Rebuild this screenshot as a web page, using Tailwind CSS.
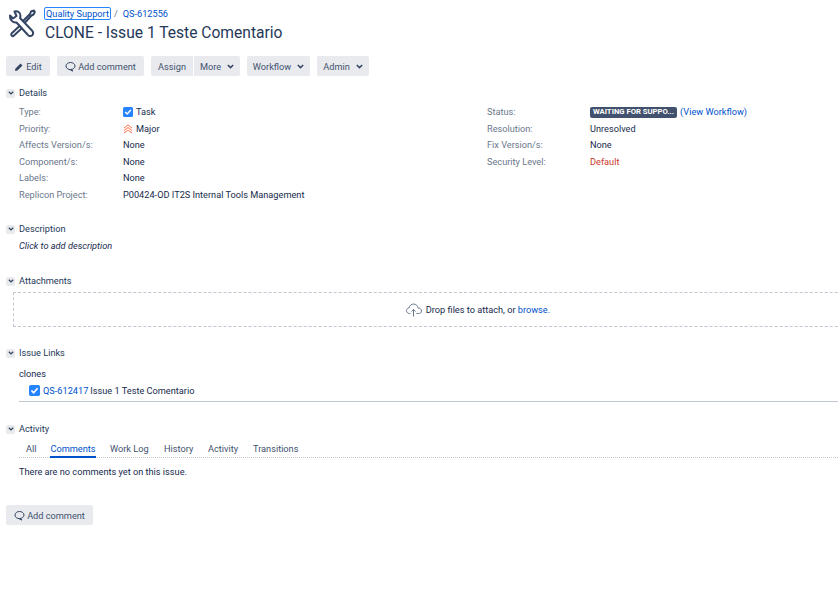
<!doctype html>
<html><head><meta charset="utf-8"><script src="https://cdn.jsdelivr.net/npm/@tailwindcss/browser@4"></script></head>
<body class="bg-white overflow-hidden">
<div class="w-[838px] h-[608px] overflow-hidden font-['Roboto',sans-serif] text-[9.2px] text-[#172b4d]">
  <header class="flex h-[54px] pl-[8px] pt-[7px]">
    <svg class="w-[28px] h-[29px] mt-[2px] text-[#344563]" viewBox="0 0 28 29" fill="none" stroke="currentColor" stroke-width="2" stroke-linecap="round" stroke-linejoin="round">
      <path d="M2 6.500 5 9.500 8.500 7 6.500 2.500C9.500 1.500 12.500 3.500 12.500 7L12 9 23.500 21C25.500 23 25.500 25 24 26.500C22.500 27.500 20.500 27 19.500 25.500L8.500 13.500C5 14 1.500 11 2 6.500Z"/>
      <path d="M11.500 17 3.500 24.500C2.500 26.500 4.500 28 6 26.500L13.500 19.500"/>
      <path d="M15.500 11.500 22 5 23 2.500 26 1.500 26.800 3 25.500 5.500 23.500 6.500 17.500 13"/>
    </svg>
    <div class="ml-[8px] flex flex-col">
      <div class="flex items-center h-[13px] text-[#0052cc]"><a class="px-[1px] border border-[#2684ff] rounded-[2px] leading-[11px]">Quality Support</a><span class="ml-[3px] text-[#5e6c84]">/</span><a class="ml-[5px]">QS-612556</a></div>
      <h1 class="mt-[3px] ml-[1px] text-[15.600px] leading-[20px] text-[#253858]">CLONE - Issue 1 Teste Comentario</h1>
    </div>
  </header>
  <nav class="flex ml-[6px] mt-[2px] h-[20px] text-[#42526e]">
    <button class="flex items-center justify-center pt-px w-[44px] bg-[#e9eaee] rounded-[2px]"><svg class="w-[10px] h-[10px] mr-[2px]" viewBox="0 0 10 10" fill="#344563"><path d="M1 9 1.500 6.500 6.500 1.500 8.500 3.500 3.500 8.500Z"/></svg>Edit</button>
    <button class="flex items-center justify-center pt-px w-[87px] ml-[7px] bg-[#e9eaee] rounded-[2px]"><svg class="w-[11px] h-[11px] mr-[2px]" viewBox="0 0 11 11" fill="none" stroke="#344563" stroke-width="1"><path d="M5.500 1.500C8 1.500 10 3 10 5S8 8.500 5.500 8.500L8 10 4 8.300C2 8 1 6.500 1 5 1 3 3 1.500 5.500 1.500Z"/></svg>Add comment</button>
    <button class="flex items-center justify-center pt-px w-[42px] ml-[7px] bg-[#e9eaee] rounded-l-[2px]">Assign</button>
    <button class="flex items-center justify-center pt-px w-[46px] ml-[1px] bg-[#e9eaee] rounded-r-[2px]">More<svg class="w-[7px] h-[5px] ml-[6px]" viewBox="0 0 7 5" fill="none" stroke="#344563" stroke-width="1.500"><path d="M.8 1 3.500 3.600 6.200 1"/></svg></button>
    <button class="flex items-center justify-center pt-px w-[63px] ml-[7px] bg-[#e9eaee] rounded-[2px]">Workflow<svg class="w-[7px] h-[5px] ml-[6px]" viewBox="0 0 7 5" fill="none" stroke="#344563" stroke-width="1.500"><path d="M.8 1 3.500 3.600 6.200 1"/></svg></button>
    <button class="flex items-center justify-center pt-px w-[52px] ml-[7px] bg-[#e9eaee] rounded-[2px]">Admin<svg class="w-[7px] h-[5px] ml-[6px]" viewBox="0 0 7 5" fill="none" stroke="#344563" stroke-width="1.500"><path d="M.8 1 3.500 3.600 6.200 1"/></svg></button>
  </nav>
  <section class="mt-[10px] h-[136px]">
    <div class="flex items-center h-[14px] ml-[6px]"><span class="flex items-center justify-center w-[9px] h-[9px] bg-[#e9eaee] rounded-[2px]"><svg class="w-[6px] h-[4px]" viewBox="0 0 7 5" fill="none" stroke="#344563" stroke-width="1.600"><path d="M.8 1 3.500 3.600 6.200 1"/></svg></span><span class="ml-[4px] text-[#253858]">Details</span></div>
    <div class="mt-[4px] ml-[19px] flex">
      <dl class="w-[468px] grid grid-cols-[104px_1fr] auto-rows-[16.500px] items-center text-[#172b4d]">
        <dt class="text-[#6b778c]">Type:</dt><dd class="flex items-center"><svg class="w-[10px] h-[10px] mr-[3px]" viewBox="0 0 10 10"><rect width="10" height="10" rx="1.500" fill="#2684ff"/><path d="M2.200 5 4.200 7 7.800 3" fill="none" stroke="#fff" stroke-width="1.500"/></svg>Task</dd>
        <dt class="text-[#6b778c]">Priority:</dt><dd class="flex items-center"><svg class="w-[10px] h-[10px] mr-[3px]" viewBox="0 0 10 10" fill="none" stroke="#ff7452" stroke-width="1"><path d="M1 4 5 1 9 4M1 6.500 5 3.500 9 6.500M1 9 5 6 9 9"/></svg>Major</dd>
        <dt class="text-[#6b778c]">Affects Version/s:</dt><dd>None</dd>
        <dt class="text-[#6b778c]">Component/s:</dt><dd>None</dd>
        <dt class="text-[#6b778c]">Labels:</dt><dd>None</dd>
        <dt class="text-[#6b778c]">Replicon Project:</dt><dd>P00424-OD IT2S Internal Tools Management</dd>
      </dl>
      <dl class="grid grid-cols-[103px_1fr] auto-rows-[16.500px] items-center self-start">
        <dt class="text-[#6b778c]">Status:</dt><dd class="flex items-center"><span class="px-[3px] h-[11px] leading-[10px] bg-[#42526e] text-white font-bold text-[7.700px] rounded-[2px]">WAITING FOR SUPPO...</span><a class="ml-[3px] text-[#0052cc]">(View Workflow)</a></dd>
        <dt class="text-[#6b778c]">Resolution:</dt><dd>Unresolved</dd>
        <dt class="text-[#6b778c]">Fix Version/s:</dt><dd>None</dd>
        <dt class="text-[#6b778c]">Security Level:</dt><dd class="text-[#c9372c]">Default</dd>
      </dl>
    </div>
  </section>
  <section class="h-[52px]">
    <div class="flex items-center h-[14px] ml-[6px]"><span class="flex items-center justify-center w-[9px] h-[9px] bg-[#e9eaee] rounded-[2px]"><svg class="w-[6px] h-[4px]" viewBox="0 0 7 5" fill="none" stroke="#344563" stroke-width="1.600"><path d="M.8 1 3.500 3.600 6.200 1"/></svg></span><span class="ml-[4px] text-[#253858]">Description</span></div>
    <p class="ml-[19px] mt-[3px] italic">Click to add description</p>
  </section>
  <section class="h-[72px]">
    <div class="flex items-center h-[14px] ml-[6px]"><span class="flex items-center justify-center w-[9px] h-[9px] bg-[#e9eaee] rounded-[2px]"><svg class="w-[6px] h-[4px]" viewBox="0 0 7 5" fill="none" stroke="#344563" stroke-width="1.600"><path d="M.8 1 3.500 3.600 6.200 1"/></svg></span><span class="ml-[4px] text-[#253858]">Attachments</span></div>
    <div class="ml-[13px] mt-[4px] w-[930px] h-[35px] border border-dashed border-[#c1c7d0] flex items-center justify-center">
      <svg class="w-[16px] h-[14px] mr-[4px]" viewBox="0 0 16 14" fill="none" stroke="#6b778c" stroke-width="1"><path d="M4.500 10.500H3.500C1.500 10.500 .5 9 .5 7.500S2 5 3 5C3.500 2.500 5.500 1 7.500 1 10 1 11.800 2.800 12 5 14 5 15.500 6 15.500 8S14 10.500 12.500 10.500H10.500"/><path d="M7.500 13.500V6.500M5.500 8.500 7.500 6.500 9.500 8.500"/></svg>
      <span>Drop files to attach, or <a class="text-[#0052cc]">browse.</a></span>
    </div>
  </section>
  <section class="h-[76px]">
    <div class="flex items-center h-[14px] ml-[6px]"><span class="flex items-center justify-center w-[9px] h-[9px] bg-[#e9eaee] rounded-[2px]"><svg class="w-[6px] h-[4px]" viewBox="0 0 7 5" fill="none" stroke="#344563" stroke-width="1.600"><path d="M.8 1 3.500 3.600 6.200 1"/></svg></span><span class="ml-[4px] text-[#253858]">Issue Links</span></div>
    <div class="ml-[19px] mt-[7px] h-[14px] leading-[14px]">clones</div>
    <div class="ml-[19px] mt-[3px] h-[18px] pl-[10px] border-b border-[#c1c7d0] flex items-start"><svg class="w-[11px] h-[11px] mr-[3px] mt-[1px]" viewBox="0 0 10 10"><rect width="10" height="10" rx="1.500" fill="#2684ff"/><path d="M2.200 5 4.200 7 7.800 3" fill="none" stroke="#fff" stroke-width="1.500"/></svg><a class="text-[#0052cc] leading-[13px]">QS-612417</a><span class="ml-[2px] leading-[13px]">Issue 1 Teste Comentario</span></div>
  </section>
  <section>
    <div class="flex items-center h-[14px] ml-[6px]"><span class="flex items-center justify-center w-[9px] h-[9px] bg-[#e9eaee] rounded-[2px]"><svg class="w-[6px] h-[4px]" viewBox="0 0 7 5" fill="none" stroke="#344563" stroke-width="1.600"><path d="M.8 1 3.500 3.600 6.200 1"/></svg></span><span class="ml-[4px] text-[#253858]">Activity</span></div>
    <div class="ml-[19px] mt-[6px] h-[16px] flex border-b border-dotted border-[#c1c7d0] text-[#42526e] pl-[7px]">
      <a class="leading-[14px] w-[11px]">All</a><a class="ml-[13px] w-[46px] text-center h-[16px] leading-[14px] border-b-2 border-[#0052cc] text-[#0052cc]">Comments</a><a class="ml-[14px] w-[40px] leading-[14px]">Work Log</a><a class="ml-[14px] w-[30px] leading-[14px]">History</a><a class="ml-[14px] w-[31px] leading-[14px]">Activity</a><a class="ml-[14px] leading-[14px]">Transitions</a>
    </div>
    <p class="ml-[19px] mt-[7px] leading-[14px]">There are no comments yet on this issue.</p>
    <button class="flex items-center justify-center pt-px w-[87px] h-[20px] ml-[6px] mt-[26px] bg-[#e9eaee] rounded-[2px] text-[#42526e]"><svg class="w-[11px] h-[11px] mr-[2px]" viewBox="0 0 11 11" fill="none" stroke="#344563" stroke-width="1"><path d="M5.500 1.500C8 1.500 10 3 10 5S8 8.500 5.500 8.500L8 10 4 8.300C2 8 1 6.500 1 5 1 3 3 1.500 5.500 1.500Z"/></svg>Add comment</button>
  </section>
</div>
</body></html>
